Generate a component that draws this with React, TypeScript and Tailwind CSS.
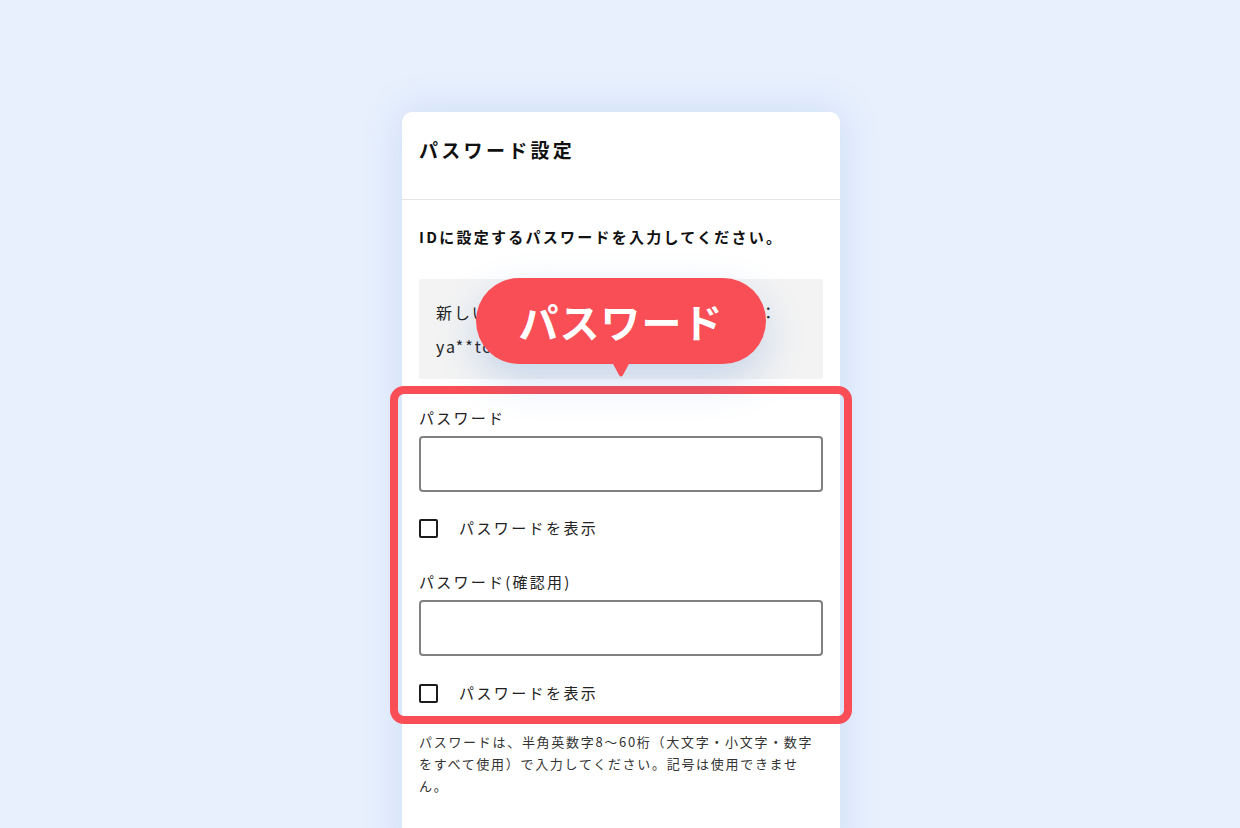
import React from 'react';

const jp = { fontFamily: '"Noto Sans CJK JP", "Noto Sans", sans-serif' };

function Checkbox({ label }: { label: string }) {
  return (
    <label className="flex items-center h-[20px] cursor-pointer select-none">
      <span className="w-[19px] h-[19px] border-2 border-[#1c1c1c] rounded-[2px] bg-white" />
      <span className="ml-[21px] text-[15px] tracking-[0.16em] text-[#222]">{label}</span>
    </label>
  );
}

function Field({ label }: { label: string }) {
  return (
    <div>
      <div className="text-[15px] leading-[22px] tracking-[0.15em] text-[#222]">{label}</div>
      <input
        type="password"
        className="mt-[7px] block w-full h-[56px] border-2 border-[#818181] rounded-[4px] bg-white px-3 outline-none"
      />
    </div>
  );
}

export default function App() {
  return (
    <div className="h-screen overflow-hidden bg-[#E8F0FD] pt-[112px] pl-[2px]" style={jp}>
      <div className="relative mx-auto w-[438px] min-h-[760px] bg-white rounded-[10px] shadow-[0_0_40px_rgba(70,130,220,0.18)]">
        {/* ヘッダー */}
        <div className="h-[88px] px-[17px] pt-[24px] border-b border-[#e4e4e4]">
          <h1 className="text-[19px] leading-[28px] font-bold tracking-[3.3px] text-[#111]">パスワード設定</h1>
        </div>

        <div className="px-[17px] pt-[26px]">
          <p className="text-[15px] leading-[22px] font-bold tracking-[0.15em] text-[#111]">
            IDに設定するパスワードを入力してください。
          </p>

          <div className="mt-[31px] bg-[#F3F3F3] rounded-[3px] px-[17px] py-[16px] text-[16px] leading-[34px] tracking-[0.12em] text-[#222]">
            <div>新しいパスワードを設定するログインID：</div>
            <div>ya**to@example.co.jp</div>
          </div>
        </div>

        {/* 強調枠 */}
        <div className="mt-[7px] -mx-[12px] border-8 border-[#F94E55] rounded-[14px] px-[21px] pt-[13px] pb-[13px]">
          <Field label="パスワード" />
          <div className="mt-[26px]">
            <Checkbox label="パスワードを表示" />
          </div>
          <div className="mt-[33px]">
            <Field label="パスワード(確認用)" />
          </div>
          <div className="mt-[27px]">
            <Checkbox label="パスワードを表示" />
          </div>
        </div>

        <p className="px-[17px] mt-[7px] text-[13px] leading-[22px] tracking-[1.7px] text-[#333]">
          パスワードは、半角英数字8〜60桁（大文字・小文字・数字をすべて使用）で入力してください。記号は使用できません。
        </p>

        {/* 吹き出し */}
        <div className="absolute left-[74px] top-[166px] w-[290px] h-[86px] rounded-full bg-[#F94E55] flex items-center justify-center shadow-[0_16px_40px_rgba(60,120,210,0.24)]">
          <span className="text-white text-[40px] font-bold tracking-[1px] leading-none">パスワード</span>
          <svg
            className="absolute left-1/2 -translate-x-1/2 top-[84px]"
            width="20"
            height="16"
            viewBox="0 0 20 16"
          >
            <path d="M1 0 H19 L12 13 Q10 16 8 13 Z" fill="#F94E55" />
          </svg>
        </div>
      </div>
    </div>
  );
}
